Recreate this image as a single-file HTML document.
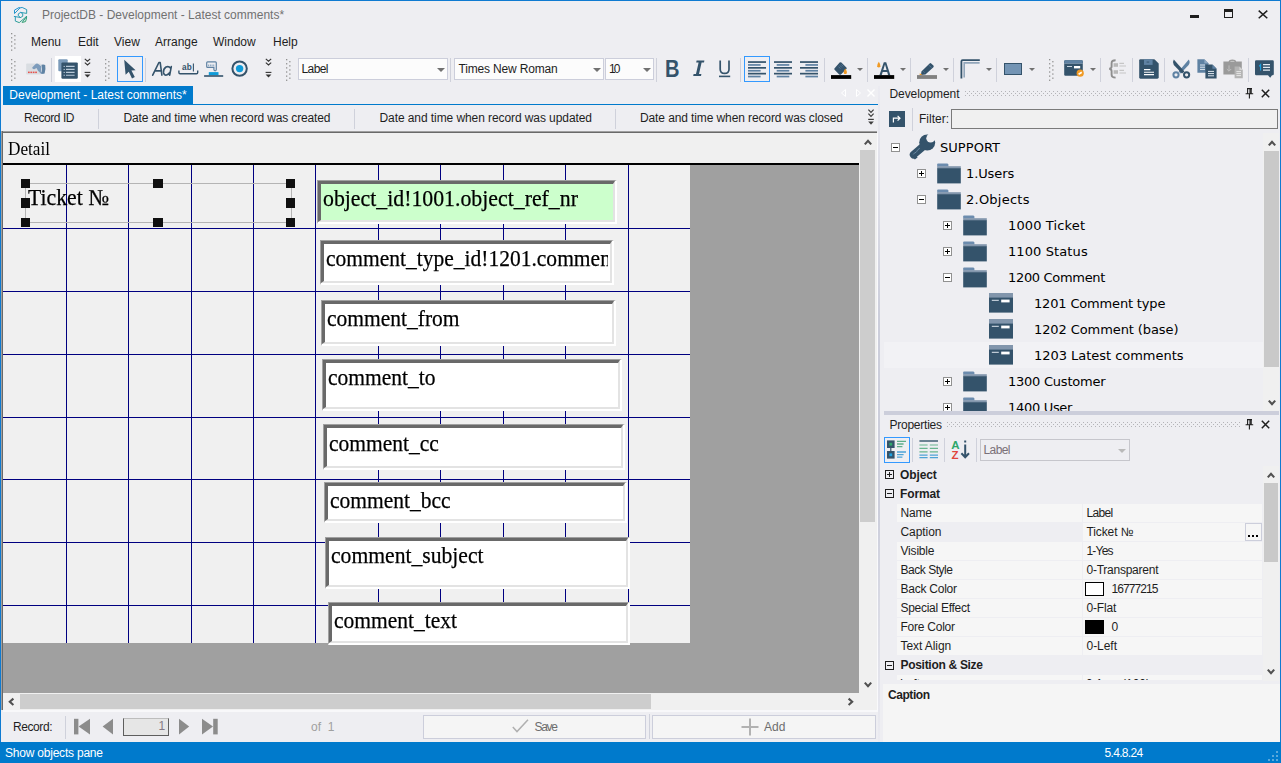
<!DOCTYPE html>
<html><head><meta charset="utf-8"><title>ProjectDB</title>
<style>
*{box-sizing:border-box;margin:0;padding:0}
html,body{width:1281px;height:763px;overflow:hidden;background:#eeeef2}
body{position:relative;font-family:"Liberation Sans",sans-serif;font-size:12px;color:#1e1e1e}
.abs,.abs *{position:absolute}
#win{position:absolute;left:0;top:0;width:1281px;height:763px;border:1px solid #0e7ad1;border-bottom:0;background:#eeeef2}
.t{position:absolute;white-space:nowrap;line-height:16px;height:16px}
.sep{position:absolute;width:1px;background:#cfd1db}
.grip{position:absolute;width:6px;background-image:radial-gradient(circle at 1px 1px,#9a9a9a 0.6px,transparent 1px),radial-gradient(circle at 1px 1px,#9a9a9a 0.6px,transparent 1px);background-size:2px 4px;background-position:0 0,3px 2px;background-repeat:repeat-y}
.hgrip{position:absolute;height:5px;background-image:radial-gradient(circle,#aaa 0.55px,transparent 0.85px),radial-gradient(circle,#aaa 0.55px,transparent 0.85px);background-size:4px 4px;background-position:0 0,2px 2px}
.combo{position:absolute;background:#fcfcfc;border:1px solid #cccedb}
.combo .t{left:3px;top:3px}
.arr{position:absolute;width:0;height:0;border-left:4px solid transparent;border-right:4px solid transparent;border-top:4.5px solid #717171}
.selbtn{position:absolute;border:1px solid #3399ff}
svg{position:absolute;overflow:visible}
.serif{font-family:"Liberation Serif",serif;color:#000;-webkit-text-stroke:0.25px #000}
.fld{position:absolute;border:1px solid;border-color:#a0a0a0 #fff #fff #a0a0a0;border-right-width:2px;border-bottom-width:2px}
.fi{position:absolute;left:0;top:0;right:0;bottom:0;border:solid;border-width:3px 2px 2px 3px;border-color:#696969 #e3e3e3 #e3e3e3 #696969;background:inherit;overflow:hidden}
.fi .t{position:absolute}
.fc{position:absolute;left:0;top:0;right:2px;bottom:0;overflow:hidden}
</style></head><body>
<div id="win"></div>
<svg style="left:8px;top:2px" width="26" height="26" viewBox="0 0 763 763" fill="none" stroke="url(#lg)" stroke-width="29" stroke-linejoin="round" stroke-linecap="round">
<defs><linearGradient id="lg" gradientUnits="userSpaceOnUse" x1="185" y1="150" x2="545" y2="600"><stop offset="0" stop-color="#1a8fe0"/><stop offset="0.55" stop-color="#2a9cb0"/><stop offset="1" stop-color="#2f9e5a"/></linearGradient></defs>
<path d="M200 232 L325 162 L352 174 L200 330 Z"/>
<path d="M352 174 L415 160 L548 222 L548 335 L372 305"/>
<path d="M312 342 L372 308 L432 345 L432 420 L368 455 L312 412 Z"/>
<path d="M185 425 L368 455 M215 440 L215 560 L330 605 L545 425"/>
<path d="M545 425 L545 470 L515 575 L415 600 L515 470 Z"/>
</svg>
<div class="t" style="left:42px;top:7px;color:#717171">ProjectDB - Development - Latest comments*</div>
<div style="position:absolute;left:1190px;top:15px;width:9px;height:3px;background:#1e1e1e"></div>
<div style="position:absolute;left:1224px;top:9px;width:9px;height:9px;border:1px solid #1e1e1e;border-top-width:3px"></div>
<svg style="left:1258px;top:10px" width="10" height="9" viewBox="0 0 10 9"><path d="M0.7 0.6 L9.3 8.2 M9.3 0.6 L0.7 8.2" stroke="#1e1e1e" stroke-width="1.5"/></svg>
<svg style="left:11px;top:33px" width="5" height="19" fill="#909090"><rect x="0" y="0.00" width="1.3" height="1.3"/><rect x="3.2" y="2.06" width="1.3" height="1.3"/><rect x="0" y="4.12" width="1.3" height="1.3"/><rect x="3.2" y="6.18" width="1.3" height="1.3"/><rect x="0" y="8.24" width="1.3" height="1.3"/><rect x="3.2" y="10.30" width="1.3" height="1.3"/><rect x="0" y="12.36" width="1.3" height="1.3"/><rect x="3.2" y="14.42" width="1.3" height="1.3"/><rect x="0" y="16.48" width="1.3" height="1.3"/></svg>
<div class="t" style="left:31px;top:34px;">Menu</div>
<div class="t" style="left:78px;top:34px;">Edit</div>
<div class="t" style="left:114px;top:34px;">View</div>
<div class="t" style="left:155px;top:34px;">Arrange</div>
<div class="t" style="left:213px;top:34px;">Window</div>
<div class="t" style="left:273px;top:34px;">Help</div>
<svg style="left:11px;top:59px" width="5" height="22" fill="#909090"><rect x="0" y="0.00" width="1.3" height="1.3"/><rect x="3.2" y="2.06" width="1.3" height="1.3"/><rect x="0" y="4.12" width="1.3" height="1.3"/><rect x="3.2" y="6.18" width="1.3" height="1.3"/><rect x="0" y="8.24" width="1.3" height="1.3"/><rect x="3.2" y="10.30" width="1.3" height="1.3"/><rect x="0" y="12.36" width="1.3" height="1.3"/><rect x="3.2" y="14.42" width="1.3" height="1.3"/><rect x="0" y="16.48" width="1.3" height="1.3"/><rect x="3.2" y="18.54" width="1.3" height="1.3"/><rect x="0" y="20.60" width="1.3" height="1.3"/></svg>
<svg style="left:26px;top:61px" width="21" height="15" viewBox="0 0 21 15">
<rect x="0.2" y="2.4" width="14.6" height="11.2" rx="0.8" fill="#d9dde2"/>
<path d="M6.2 6.6 L9.4 3.2 Q10.9 2 12.3 3 L15.2 5.2 L15.2 10.6 L17.2 12.6 L15.2 12.9 L12 9.8 L10.5 6.9 L8.2 8.3 Q6.3 8.4 6.2 6.6 Z" fill="#7d9cbc"/>
<path d="M15.4 3.8 Q17.4 3 19.2 4 Q20 8.4 18.6 12.6 Q16.8 13.2 15.6 12.2 Q16.4 8 15.4 3.8Z" fill="#5f82a3"/>
<rect x="2" y="10.6" width="1.7" height="1.5" fill="#e8504a"/><rect x="4.4" y="10.6" width="1.7" height="1.5" fill="#e8504a"/><rect x="6.8" y="10.6" width="1.7" height="1.5" fill="#e8504a"/><rect x="9.2" y="10.6" width="1.7" height="1.5" fill="#e8504a"/>
</svg>
<div class="sep" style="left:51px;top:58px;height:24px"></div>
<div style="position:absolute;left:55px;top:56px;width:26px;height:26px;background:#fff"></div>
<svg style="left:58px;top:59px" width="21" height="21" viewBox="0 0 21 21">
<rect x="0.3" y="0.3" width="9.4" height="12" rx="1" fill="#7b9bba"/>
<rect x="3.4" y="3.4" width="16.4" height="16.4" rx="1.2" fill="#34536b"/>
<g stroke="#b9c9d8" stroke-width="1.1"><path d="M8 7.4H16.6M8 10.4H16.6M8 13.4H16.6M8 16.2H16.6"/></g>
<g fill="#b9c9d8"><rect x="5.6" y="6.9" width="1.2" height="1.1"/><rect x="5.6" y="9.9" width="1.2" height="1.1"/><rect x="5.6" y="12.9" width="1.2" height="1.1"/><rect x="5.6" y="15.7" width="1.2" height="1.1"/></g>
</svg>
<svg style="left:84px;top:58px" width="7" height="21" viewBox="0 0 7 21" fill="none">
<path d="M0.8 0.8 L3.5 3.2 L6.2 0.8 M0.8 4.6 L3.5 7 L6.2 4.6" stroke="#333" stroke-width="1.1"/>
<path d="M0.6 14.4H6.4" stroke="#333" stroke-width="1.1"/><path d="M0.6 16.4H6.4L3.5 19.6Z" fill="#333"/></svg>
<svg style="left:105px;top:59px" width="5" height="22" fill="#909090"><rect x="0" y="0.00" width="1.3" height="1.3"/><rect x="3.2" y="2.06" width="1.3" height="1.3"/><rect x="0" y="4.12" width="1.3" height="1.3"/><rect x="3.2" y="6.18" width="1.3" height="1.3"/><rect x="0" y="8.24" width="1.3" height="1.3"/><rect x="3.2" y="10.30" width="1.3" height="1.3"/><rect x="0" y="12.36" width="1.3" height="1.3"/><rect x="3.2" y="14.42" width="1.3" height="1.3"/><rect x="0" y="16.48" width="1.3" height="1.3"/><rect x="3.2" y="18.54" width="1.3" height="1.3"/><rect x="0" y="20.60" width="1.3" height="1.3"/></svg>
<div class="selbtn" style="left:117px;top:56px;width:26px;height:26px"></div>
<svg style="left:123px;top:59px" width="14" height="20" viewBox="0 0 14 20"><path d="M1.2 0.8 L12.6 11.2 L8.4 11.6 L11.8 18 L9 19.4 L5.8 12.8 L2.6 15.8 Z" fill="#34536b"/></svg>
<div class="sep" style="left:145px;top:58px;height:24px"></div>
<svg style="left:151px;top:60px" width="24" height="18" viewBox="0 0 24 18" fill="none" stroke="#34536b" stroke-width="1.6" stroke-linejoin="round" stroke-linecap="round">
<path d="M1.7 15.2 L7.9 2.5 L9.2 2.5 L10.9 15.2 M4 10.9 H10.2"/>
<path d="M20.3 6.6 L18.7 15.2 M19.8 8.4 Q17.8 5.8 15 7 Q12.2 8.8 12.5 12.4 Q13 15.6 15.6 15 Q17.6 14.4 19 12.2"/></svg>
<svg style="left:178px;top:60px" width="21" height="18" viewBox="0 0 21 18"><text x="4.1" y="10.1" font-family="Liberation Sans, sans-serif" font-weight="bold" font-size="8.6" fill="#34536b" textLength="9.6" lengthAdjust="spacingAndGlyphs">ab</text>
<path d="M15.4 3.4V11.6" stroke="#34536b" stroke-width="1.1"/>
<path d="M0.9 10.6V12.6Q0.9 13.8 2.1 13.8H18.5Q19.7 13.8 19.7 12.6V10.6" fill="none" stroke="#34536b" stroke-width="1.4"/></svg>
<svg style="left:204px;top:60px" width="20" height="18" viewBox="0 0 20 18">
<path d="M3.6 1.9H11.4Q12.3 1.9 12.3 2.8V9.6Q12.3 10.8 11.1 10.8Q9.9 10.8 9.9 9.6V7.3H3.6Q2.7 7.3 2.7 6.4V2.8Q2.7 1.9 3.6 1.9Z" fill="none" stroke="#5f82a3" stroke-width="1.2"/>
<path d="M4.2 4.6h0.9v1.6h-0.9zM5.9 4.6h0.9v1.6h-0.9zM7.6 4.6h0.9v1.6h-0.9zM9.3 4.6h0.9v1.6h-0.9z" fill="#7b9bba"/>
<rect x="4.8" y="12.1" width="9.7" height="3.2" fill="#0f9bd9"/>
<rect x="0.1" y="15.2" width="19.1" height="1.6" fill="#34536b"/></svg>
<svg style="left:231px;top:60px" width="18" height="18" viewBox="0 0 18 18"><circle cx="8.6" cy="8.6" r="7.2" fill="none" stroke="#34536b" stroke-width="2"/><circle cx="8.6" cy="8.6" r="3.7" fill="#0f9bd9"/></svg>
<svg style="left:265px;top:58px" width="7" height="21" viewBox="0 0 7 21" fill="none">
<path d="M0.8 0.8 L3.5 3.2 L6.2 0.8 M0.8 4.6 L3.5 7 L6.2 4.6" stroke="#333" stroke-width="1.1"/>
<path d="M0.6 14.4H6.4" stroke="#333" stroke-width="1.1"/><path d="M0.6 16.4H6.4L3.5 19.6Z" fill="#333"/></svg>
<svg style="left:286px;top:59px" width="5" height="22" fill="#909090"><rect x="0" y="0.00" width="1.3" height="1.3"/><rect x="3.2" y="2.06" width="1.3" height="1.3"/><rect x="0" y="4.12" width="1.3" height="1.3"/><rect x="3.2" y="6.18" width="1.3" height="1.3"/><rect x="0" y="8.24" width="1.3" height="1.3"/><rect x="3.2" y="10.30" width="1.3" height="1.3"/><rect x="0" y="12.36" width="1.3" height="1.3"/><rect x="3.2" y="14.42" width="1.3" height="1.3"/><rect x="0" y="16.48" width="1.3" height="1.3"/><rect x="3.2" y="18.54" width="1.3" height="1.3"/><rect x="0" y="20.60" width="1.3" height="1.3"/></svg>
<div class="combo" style="left:298px;top:58px;width:150px;height:22px"><div class="t" style="left:2.5px;top:2px;;letter-spacing:-0.594px">Label</div></div><div class="arr" style="left:436.5px;top:68px;border-top-color:#717171"></div>
<div class="sep" style="left:450px;top:58px;height:24px"></div>
<div class="combo" style="left:454px;top:58px;width:150px;height:22px"><div class="t" style="left:3.5px;top:2px;;letter-spacing:-0.163px">Times New Roman</div></div><div class="arr" style="left:592.5px;top:68px;border-top-color:#717171"></div>
<div class="combo" style="left:605px;top:58px;width:49px;height:22px"><div class="t" style="left:3px;top:2px;;letter-spacing:-1.859px">10</div></div><div class="arr" style="left:642.5px;top:68px;border-top-color:#717171"></div>
<div class="sep" style="left:656px;top:58px;height:24px"></div>
<svg style="left:665px;top:59px" width="16" height="20" viewBox="0 0 16 20"><text x="0" y="17.6" font-family="Liberation Sans, sans-serif" font-weight="bold" font-size="23" fill="#34536b" textLength="14.5" lengthAdjust="spacingAndGlyphs">B</text></svg>
<svg style="left:692px;top:59px" width="14" height="20" viewBox="0 0 14 20"><path d="M4.6 1.4H12.4L12 3.4H9.6L7 15H9.4L9 17H1.2L1.6 15H4L6.6 3.4H4.2Z" fill="#34536b"/></svg>
<svg style="left:718px;top:59px" width="14" height="20" viewBox="0 0 14 20"><path d="M2.2 1.4V10.2Q2.2 14.4 6.6 14.4Q11 14.4 11 10.2V1.4" fill="none" stroke="#34536b" stroke-width="1.7"/><path d="M1 17.4H12.2" stroke="#34536b" stroke-width="1.6"/></svg>
<div class="sep" style="left:740px;top:58px;height:24px"></div>
<div class="selbtn" style="left:744px;top:56px;width:26px;height:26px"></div>
<svg style="left:748px;top:59px" width="18" height="20" viewBox="0 0 18 20"><rect x="0.0" y="2.2" width="18" height="1.7" fill="#34536b"/><rect x="0.0" y="5.1" width="12.6" height="1.7" fill="#5f82a3"/><rect x="0.0" y="8.0" width="18" height="1.7" fill="#34536b"/><rect x="0.0" y="10.9" width="12.6" height="1.7" fill="#5f82a3"/><rect x="0.0" y="13.8" width="18" height="1.7" fill="#34536b"/><rect x="0.0" y="16.7" width="12.6" height="1.7" fill="#5f82a3"/></svg>
<svg style="left:774px;top:59px" width="18" height="20" viewBox="0 0 18 20"><rect x="0.0" y="2.2" width="18" height="1.7" fill="#34536b"/><rect x="2.7" y="5.1" width="12.6" height="1.7" fill="#5f82a3"/><rect x="0.0" y="8.0" width="18" height="1.7" fill="#34536b"/><rect x="2.7" y="10.9" width="12.6" height="1.7" fill="#5f82a3"/><rect x="0.0" y="13.8" width="18" height="1.7" fill="#34536b"/><rect x="2.7" y="16.7" width="12.6" height="1.7" fill="#5f82a3"/></svg>
<svg style="left:800px;top:59px" width="18" height="20" viewBox="0 0 18 20"><rect x="0.0" y="2.2" width="18" height="1.7" fill="#34536b"/><rect x="5.4" y="5.1" width="12.6" height="1.7" fill="#5f82a3"/><rect x="0.0" y="8.0" width="18" height="1.7" fill="#34536b"/><rect x="5.4" y="10.9" width="12.6" height="1.7" fill="#5f82a3"/><rect x="0.0" y="13.8" width="18" height="1.7" fill="#34536b"/><rect x="5.4" y="16.7" width="12.6" height="1.7" fill="#5f82a3"/></svg>
<div class="sep" style="left:824px;top:58px;height:24px"></div>
<svg style="left:831px;top:60px" width="21" height="20" viewBox="0 0 21 20">
<path d="M8.6 2.6 Q9.5 1.7 10.4 2.6 L15.4 7.4 Q16.2 8.2 15.4 9 L10 14.4 Q9.1 15.2 8.2 14.4 L3.6 9.8 Q2.8 9 3.6 8.2 Z" fill="#34536b"/>
<path d="M7.6 6.6 L9.4 8.6 M9 5.4 L10.8 7.4 M10.4 4.4 L12.2 6.4" stroke="#5f82a3" stroke-width="0.7"/>
<path d="M14.3 8.4 Q16.4 11.4 15.9 12.9 Q15.3 14.1 14.3 14.1 Q13.3 14.1 12.7 12.9 Q12.2 11.4 14.3 8.4Z" fill="#f09a24"/>
<rect x="0" y="15.1" width="20.2" height="3.8" fill="#000"/></svg>
<div class="arr" style="left:856.5px;top:68px;border-left-width:3px;border-right-width:3px;border-top-width:3px;border-top-color:#717171"></div>
<div class="sep" style="left:867px;top:58px;height:24px"></div>
<svg style="left:874px;top:60px" width="21" height="20" viewBox="0 0 21 20">
<path d="M4.8 1.8 Q6.9 4.8 6.4 6.3 Q5.8 7.5 4.8 7.5 Q3.8 7.5 3.2 6.3 Q2.7 4.8 4.8 1.8Z" fill="#f09a24"/>
<path d="M5.4 15.2 L9.8 2.2 H12.2 L16.4 15.2 H14.1 L13.2 12 H8.7 L7.7 15.2 Z M9.3 10.1 H12.6 L11 4.6Z" fill="#34536b" fill-rule="evenodd"/>
<rect x="0" y="15.1" width="20.2" height="3.8" fill="#000"/></svg>
<div class="arr" style="left:899.5px;top:68px;border-left-width:3px;border-right-width:3px;border-top-width:3px;border-top-color:#717171"></div>
<div class="sep" style="left:910px;top:58px;height:24px"></div>
<svg style="left:917px;top:60px" width="21" height="20" viewBox="0 0 21 20">
<path d="M4.4 11.4 L12.6 3.4 Q13.4 2.6 14.2 3.4 L16.4 5.6 Q17.2 6.4 16.4 7.2 L8.4 14.6 L4 14.9 Z" fill="#34536b"/>
<path d="M12 5.2 L14.4 7.6 M6.4 11.4 L7.6 12.6" stroke="#5f82a3" stroke-width="0.8"/>
<path d="M2.8 13.2 L5.4 15 L2.6 15.2Z" fill="#f09a24"/>
<rect x="0" y="15.1" width="20" height="3.8" fill="#808080"/></svg>
<div class="arr" style="left:942.5px;top:68px;border-left-width:3px;border-right-width:3px;border-top-width:3px;border-top-color:#717171"></div>
<div class="sep" style="left:953px;top:58px;height:24px"></div>
<svg style="left:960px;top:59px" width="21" height="20" viewBox="0 0 21 20" fill="none">
<path d="M1.4 19.4V2.4Q1.4 1.2 2.6 1.2H19.8" stroke="#34536b" stroke-width="1.8"/>
<path d="M4.2 18.6V3.9H19.6" stroke="#92a6ba" stroke-width="1.6"/></svg>
<div class="arr" style="left:985.5px;top:68px;border-left-width:3px;border-right-width:3px;border-top-width:3px;border-top-color:#717171"></div>
<div class="sep" style="left:996px;top:58px;height:24px"></div>
<div style="position:absolute;left:1004px;top:63px;width:18px;height:12px;background:#7394b4;border:1.6px solid #34536b"></div>
<div class="arr" style="left:1028.5px;top:68px;border-left-width:3px;border-right-width:3px;border-top-width:3px;border-top-color:#717171"></div>
<svg style="left:1049px;top:59px" width="5" height="22" fill="#909090"><rect x="0" y="0.00" width="1.3" height="1.3"/><rect x="3.2" y="2.06" width="1.3" height="1.3"/><rect x="0" y="4.12" width="1.3" height="1.3"/><rect x="3.2" y="6.18" width="1.3" height="1.3"/><rect x="0" y="8.24" width="1.3" height="1.3"/><rect x="3.2" y="10.30" width="1.3" height="1.3"/><rect x="0" y="12.36" width="1.3" height="1.3"/><rect x="3.2" y="14.42" width="1.3" height="1.3"/><rect x="0" y="16.48" width="1.3" height="1.3"/><rect x="3.2" y="18.54" width="1.3" height="1.3"/><rect x="0" y="20.60" width="1.3" height="1.3"/></svg>
<svg style="left:1064px;top:60px" width="21" height="18" viewBox="0 0 21 18">
<rect x="0.2" y="0.2" width="18.6" height="15.6" rx="1.2" fill="#34536b"/>
<rect x="0.2" y="0.2" width="18.6" height="2.8" rx="1" fill="#5f82a3"/><rect x="0.2" y="3" width="18.6" height="0.7" fill="#8ea5bd"/>
<rect x="3" y="6" width="5" height="1" fill="#c8d4e0"/><rect x="10" y="6" width="6.2" height="2.4" fill="#fff"/>
<circle cx="16.2" cy="13.2" r="3.6" fill="#f09a24"/><path d="M14.6 14.2L17.8 12.2" stroke="#fff" stroke-width="1.6"/></svg>
<div class="arr" style="left:1089.5px;top:68px;border-left-width:3px;border-right-width:3px;border-top-width:3px;border-top-color:#717171"></div>
<div class="sep" style="left:1100px;top:58px;height:24px"></div>
<svg style="left:1108px;top:59px" width="19" height="20" viewBox="0 0 19 20" fill="none">
<path d="M7.6 1.2 Q3.6 1.2 3.6 4 V7.4 Q3.6 9.6 1.2 9.8 Q3.6 10 3.6 12.2 V15.8 Q3.6 18.6 7.6 18.6" stroke="#8e8e8e" stroke-width="1.9"/>
<rect x="5.6" y="4.2" width="4.4" height="3.6" fill="#b8b8b8"/><rect x="5.6" y="11.2" width="4.4" height="3.6" fill="#b8b8b8"/>
<path d="M11.4 4.4H16M11.4 7H18M11.4 11.4H16M11.4 14H18" stroke="#c6c6c6" stroke-width="1.1"/></svg>
<div class="sep" style="left:1132px;top:58px;height:24px"></div>
<svg style="left:1139px;top:59px" width="20" height="20" viewBox="0 0 20 20">
<path d="M1.4 0.3H15.4L19.7 4.6V18.3Q19.7 19.7 18.3 19.7H1.4Q0.2 19.7 0.2 18.3V1.6Q0.2 0.3 1.4 0.3Z" fill="#34536b"/>
<rect x="5" y="0.3" width="8.6" height="5.6" fill="#5f82a3"/><rect x="7.6" y="2.6" width="2.6" height="0.9" fill="#34536b"/>
<path d="M5 10.6H11.4M5 13.2H15M5 15.6H15" stroke="#fff" stroke-width="1.1"/></svg>
<div class="sep" style="left:1164px;top:58px;height:24px"></div>
<svg style="left:1172px;top:59px" width="19" height="20" viewBox="0 0 19 20">
<path d="M16.8 0.6 Q18.6 3.4 16.6 6 L8.6 14.4 L6.6 12.6 Z" fill="#5f82a3"/>
<path d="M1.8 0.6 L12.4 12.4 L10 14.4 L1.8 6 Q0 3.2 1.8 0.6Z" fill="#34536b"/>
<circle cx="4" cy="15.8" r="2.6" fill="none" stroke="#5f82a3" stroke-width="2"/>
<circle cx="14.6" cy="15.8" r="2.6" fill="none" stroke="#34536b" stroke-width="2"/></svg>
<svg style="left:1197px;top:59px" width="21" height="20" viewBox="0 0 21 20">
<path d="M0.4 0.3H7.4L11.4 4.3V13.8H0.4Z" fill="#5f82a3"/><path d="M7.4 0.3L11.4 4.3H7.4Z" fill="#8fa9c3"/>
<path d="M3 6H8M3 8.2H8M3 10.4H8" stroke="#dfe7ef" stroke-width="1"/>
<path d="M8.4 5.6H15.4L19.6 9.8V19.6H8.4Z" fill="#34536b"/><path d="M15.4 5.6L19.6 9.8H15.4Z" fill="#5f82a3"/>
<path d="M11 12.4H17M11 14.6H17M11 16.8H17" stroke="#dfe7ef" stroke-width="1"/></svg>
<svg style="left:1223px;top:59px" width="21" height="20" viewBox="0 0 21 20">
<path d="M0.4 2.6H5.6Q6 0.4 9.4 0.4Q12.8 0.4 13.2 2.6H18.8V15.4H0.4Z" fill="#9a9a9a"/>
<path d="M7.4 2.4H11.4" stroke="#c9c9c9" stroke-width="1"/>
<path d="M6 6.4V12M3.8 10L6 12.2L8.2 10" stroke="#bdbdbd" stroke-width="1" fill="none"/>
<path d="M11.6 7.6H16.4L19.8 11V19.2H11.6Z" fill="#b4b4b4"/><path d="M16.4 7.6L19.8 11H16.4Z" fill="#d2d2d2"/>
<path d="M13.4 12.6H18M13.4 14.6H18M13.4 16.6H18" stroke="#e6e6e6" stroke-width="1"/></svg>
<div class="sep" style="left:1248px;top:58px;height:24px"></div>
<svg style="left:1255px;top:60px" width="20" height="19" viewBox="0 0 20 19">
<path d="M1.2 0.2H17.6Q18.8 0.2 18.8 1.4V14Q18.8 15.2 17.6 15.2H17L15.2 17.8L13 15.2H1.2Q0 15.2 0 14V1.4Q0 0.2 1.2 0.2Z" fill="#34536b"/>
<path d="M8 4.6H15M8 7.4H15M8 10.2H15" stroke="#e4ebf2" stroke-width="1.2"/>
<path d="M4.2 6.4L5.6 4.6V10.6" stroke="#1ba1e2" stroke-width="1.1" fill="none"/></svg>
<div style="position:absolute;left:3px;top:86px;width:190px;height:18px;background:#007acc"></div>
<div class="t" style="left:9.3px;top:87px;color:#fff;letter-spacing:-0.001px">Development - Latest comments*</div>
<div style="position:absolute;left:3px;top:104px;width:875px;height:1px;background:#007acc"></div>
<svg style="left:840px;top:88px" width="42" height="11" viewBox="0 0 42 11" fill="none" stroke="#fff" stroke-width="1">
<path d="M5.5 1.5V8.5L1.5 5Z"/><path d="M16.5 1.5V8.5L20.5 5Z"/><path d="M27.5 1.5L34.5 8.5M34.5 1.5L27.5 8.5" stroke-width="1.4"/></svg>
<div class="t" style="left:24px;top:110px;;letter-spacing:-0.441px">Record ID</div>
<div class="t" style="left:123.5px;top:110px;;letter-spacing:-0.142px">Date and time when record was created</div>
<div class="t" style="left:379.5px;top:110px;;letter-spacing:-0.082px">Date and time when record was updated</div>
<div class="t" style="left:640px;top:110px;;letter-spacing:-0.108px">Date and time when record was closed</div>
<div class="sep" style="left:98px;top:109px;height:20px"></div>
<div class="sep" style="left:354px;top:109px;height:20px"></div>
<div class="sep" style="left:615px;top:109px;height:20px"></div>
<svg style="left:867.5px;top:109px" width="6" height="17" viewBox="0 0 6 17" fill="none">
<path d="M0.4 0.6L3 3.4L5.6 0.6M0.4 4.6L3 7.4L5.6 4.6" stroke="#3c3c3c" stroke-width="1.2"/><path d="M0.2 10.4H5.8" stroke="#3c3c3c" stroke-width="1.2"/><path d="M0.2 12.4H5.8L3 15.8Z" fill="#3c3c3c"/></svg>
<div style="position:absolute;left:1px;top:131px;width:876px;height:2px;background:#a0a0a0;border-bottom:1px solid #696969"></div>
<div style="position:absolute;left:1px;top:131px;width:2px;height:579px;background:#a0a0a0;border-right:1px solid #696969"></div>
<div style="position:absolute;left:3px;top:133px;width:856px;height:32px;background:#f0f0f0;border-bottom:2px solid #000"></div>
<div class="t" style="left:8px;top:138px;font-family:'Liberation Serif',serif;font-size:19px;line-height:22px;height:22px;color:#000;transform-origin:0 0;transform:scaleX(0.905)">Detail</div>
<div style="position:absolute;left:3px;top:165px;width:856px;height:528px;background:#a0a0a0"></div>
<div style="position:absolute;left:3px;top:165px;width:687px;height:478px;background:#f0f0f0;overflow:hidden"><div style="position:absolute;left:63px;top:0;width:1px;height:478px;background:#000080"></div><div style="position:absolute;left:125px;top:0;width:1px;height:478px;background:#000080"></div><div style="position:absolute;left:188px;top:0;width:1px;height:478px;background:#000080"></div><div style="position:absolute;left:250px;top:0;width:1px;height:478px;background:#000080"></div><div style="position:absolute;left:312px;top:0;width:1px;height:478px;background:#000080"></div><div style="position:absolute;left:375px;top:0;width:1px;height:478px;background:#000080"></div><div style="position:absolute;left:437px;top:0;width:1px;height:478px;background:#000080"></div><div style="position:absolute;left:500px;top:0;width:1px;height:478px;background:#000080"></div><div style="position:absolute;left:562px;top:0;width:1px;height:478px;background:#000080"></div><div style="position:absolute;left:625px;top:0;width:1px;height:478px;background:#000080"></div><div style="position:absolute;left:0;top:63px;width:687px;height:1px;background:#000080"></div><div style="position:absolute;left:0;top:126px;width:687px;height:1px;background:#000080"></div><div style="position:absolute;left:0;top:189px;width:687px;height:1px;background:#000080"></div><div style="position:absolute;left:0;top:252px;width:687px;height:1px;background:#000080"></div><div style="position:absolute;left:0;top:314px;width:687px;height:1px;background:#000080"></div><div style="position:absolute;left:0;top:377px;width:687px;height:1px;background:#000080"></div><div style="position:absolute;left:0;top:440px;width:687px;height:1px;background:#000080"></div></div>
<div style="position:absolute;left:25px;top:183px;width:267px;height:40px;border:1px solid #b4b4b4"></div>
<div style="position:absolute;left:21px;top:179px;width:9px;height:9px;background:#101010"></div>
<div style="position:absolute;left:21px;top:198px;width:9px;height:10px;background:#101010"></div>
<div style="position:absolute;left:21px;top:218px;width:9px;height:9px;background:#101010"></div>
<div style="position:absolute;left:153px;top:179px;width:10px;height:9px;background:#101010"></div>
<div style="position:absolute;left:153px;top:218px;width:10px;height:9px;background:#101010"></div>
<div style="position:absolute;left:286px;top:179px;width:9px;height:9px;background:#101010"></div>
<div style="position:absolute;left:286px;top:198px;width:9px;height:10px;background:#101010"></div>
<div style="position:absolute;left:286px;top:218px;width:9px;height:9px;background:#101010"></div>
<div class="t serif" style="left:28px;top:184px;font-size:23px;line-height:28px;height:28px;transform-origin:0 0;transform:scaleX(0.945)">Ticket №</div>
<div class="fld" style="left:317px;top:180px;width:300px;height:44px;background:#ccffcc"><div class="fi"><div class="fc"><div class="t serif" style="left:2px;top:0.9px;font-size:23px;line-height:28px;height:28px;transform-origin:0 0;transform:scaleX(0.948)">object_id!1001.object_ref_nr</div></div></div></div>
<div class="fld" style="left:320px;top:240px;width:294px;height:45px;background:#fff"><div class="fi"><div class="fc"><div class="t serif" style="left:2px;top:1.4px;font-size:23px;line-height:28px;height:28px;transform-origin:0 0;transform:scaleX(0.935)">comment_type_id!1201.comment_type_name</div></div></div></div>
<div class="fld" style="left:321px;top:300px;width:295px;height:46px;background:#fff"><div class="fi"><div class="fc"><div class="t serif" style="left:2px;top:1.4px;font-size:23px;line-height:28px;height:28px;transform-origin:0 0;transform:scaleX(0.935)">comment_from</div></div></div></div>
<div class="fld" style="left:322px;top:359px;width:300px;height:52px;background:#fff"><div class="fi"><div class="fc"><div class="t serif" style="left:2px;top:1.4px;font-size:23px;line-height:28px;height:28px;transform-origin:0 0;transform:scaleX(0.935)">comment_to</div></div></div></div>
<div class="fld" style="left:323px;top:424px;width:302px;height:46px;background:#fff"><div class="fi"><div class="fc"><div class="t serif" style="left:2px;top:1.9px;font-size:23px;line-height:28px;height:28px;transform-origin:0 0;transform:scaleX(0.935)">comment_cc</div></div></div></div>
<div class="fld" style="left:324px;top:482px;width:303px;height:41px;background:#fff"><div class="fi"><div class="fc"><div class="t serif" style="left:2px;top:0.9px;font-size:23px;line-height:28px;height:28px;transform-origin:0 0;transform:scaleX(0.935)">comment_bcc</div></div></div></div>
<div class="fld" style="left:325px;top:537px;width:305px;height:52px;background:#fff"><div class="fi"><div class="fc"><div class="t serif" style="left:2px;top:1.4px;font-size:23px;line-height:28px;height:28px;transform-origin:0 0;transform:scaleX(0.94)">comment_subject</div></div></div></div>
<div class="fld" style="left:328px;top:602px;width:302px;height:43px;background:#fff"><div class="fi"><div class="fc"><div class="t serif" style="left:2px;top:1.4px;font-size:23px;line-height:28px;height:28px;transform-origin:0 0;transform:scaleX(0.935)">comment_text</div></div></div></div>
<div style="position:absolute;left:859px;top:133px;width:18px;height:560px;background:#f0f0f0"></div>
<div style="position:absolute;left:860px;top:150px;width:15px;height:372px;background:#cdcdcd"></div>
<svg style="left:863.7px;top:139.3px" width="8" height="6" viewBox="0 0 8 6" fill="none"><path d="M0.8 5.4L4 1.8L7.2 5.4" stroke="#505050" stroke-width="2.1"/></svg>
<svg style="left:863.7px;top:682.3px" width="8" height="6" viewBox="0 0 8 6" fill="none"><path d="M0.8 0.6L4 4.2L7.2 0.6" stroke="#505050" stroke-width="2.1"/></svg>
<div style="position:absolute;left:3px;top:693px;width:856px;height:17px;background:#f0f0f0"></div>
<div style="position:absolute;left:20px;top:694px;width:631px;height:15px;background:#cdcdcd"></div>
<svg style="left:8px;top:698px" width="6" height="8" viewBox="0 0 6 8" fill="none"><path d="M5.4 0.6L1.8 3.8L5.4 7" stroke="#505050" stroke-width="2.1"/></svg>
<svg style="left:848px;top:698px" width="6" height="8" viewBox="0 0 6 8" fill="none"><path d="M0.6 0.6L4.2 3.8L0.6 7" stroke="#505050" stroke-width="2.1"/></svg>
<div style="position:absolute;left:859px;top:693px;width:18px;height:17px;background:#f0f0f0"></div>
<div style="position:absolute;left:3px;top:710px;width:875px;height:2px;background:#f8f8fa"></div><div style="position:absolute;left:877px;top:133px;width:1px;height:578px;background:#f9f9fb"></div><div style="position:absolute;left:878px;top:86px;width:2px;height:656px;background:linear-gradient(#ebebf1,#cccedb 35%,#cccedb 65%,#ebebf1)"></div>
<div class="t" style="left:889.5px;top:86px;;letter-spacing:-0.072px">Development</div>
<svg style="left:965px;top:91px" width="275" height="5" shape-rendering="crispEdges"><defs><pattern id="hga" width="4" height="4" patternUnits="userSpaceOnUse"><rect x="0" y="0" width="1" height="1" fill="#b4b4b8"/><rect x="2" y="2" width="1" height="1" fill="#b4b4b8"/></pattern></defs><rect width="275" height="5" fill="url(#hga)"/></svg>
<svg style="left:1245px;top:88px" width="9" height="11" viewBox="0 0 9 11" fill="none"><path d="M2 0.6H7M2.6 0.6V5.6M6.2 0.6V5.6M5 0.6V5.6M0.6 5.8H8.2M4.4 5.8V10.4" stroke="#1e1e1e" stroke-width="1.1"/></svg>
<svg style="left:1261px;top:89px" width="9" height="9" viewBox="0 0 9 9"><path d="M0.8 0.8L8.2 8.2M8.2 0.8L0.8 8.2" stroke="#1e1e1e" stroke-width="1.5"/></svg>
<div style="position:absolute;left:889px;top:111px;width:16px;height:16px;background:#34536b"></div>
<svg style="left:892px;top:114px" width="10" height="10" viewBox="0 0 10 10" fill="none"><path d="M1.4 8.6V4.2H7.6M5.6 1.8L8 4.2L5.6 6.6" stroke="#fff" stroke-width="1.2"/></svg>
<div class="sep" style="left:912px;top:108px;height:23px"></div>
<div class="t" style="left:919px;top:111px;">Filter:</div>
<div style="position:absolute;left:951px;top:109px;width:327px;height:20px;border:1px solid #7a7a7a;background:#f0f0f0"></div>
<div style="position:absolute;left:884px;top:133px;width:379px;height:278px;overflow:hidden"><div style="position:absolute;left:-884px;top:-133px"><div style="position:absolute;left:884px;top:342px;width:379px;height:26px;background:#f2f2f5"></div><div style="position:absolute;left:891px;top:143px;width:9px;height:9px;border:1px solid #919191;background:#fff"></div><div style="position:absolute;left:893px;top:147px;width:5px;height:1px;background:#000"></div><svg style="left:904px;top:130px" width="40" height="34" viewBox="0 0 40 34"><defs><mask id="wm"><rect width="40" height="34" fill="#fff"/><circle cx="26.6" cy="8.3" r="4.3" fill="#000"/><path d="M23.56 5.26L29.64 11.34L37.6 3.3L31.6 -2.8Z" fill="#000"/></mask></defs>
<g mask="url(#wm)"><circle cx="23.2" cy="12.5" r="8" fill="#34536b"/><path d="M9.6 24.7L21.5 14.5" stroke="#34536b" stroke-width="7.6" stroke-linecap="round"/><path d="M8.4 21.2L13.6 27.4L10.8 29.4L6 23.4Z" fill="#34536b"/></g>
<path d="M9.4 24.4Q10.6 22.2 12 22.4Q13 21.4 13.4 20.2Q14.8 19.6 15.6 18" stroke="#7e9cb8" stroke-width="0.7" fill="none"/></svg><div class="t" style="left:940px;top:140px;font-family:'DejaVu Sans',sans-serif;font-size:13px;color:#000;letter-spacing:0.047px">SUPPORT</div><div style="position:absolute;left:917px;top:169px;width:9px;height:9px;border:1px solid #919191;background:#fff"></div><div style="position:absolute;left:919px;top:173px;width:5px;height:1px;background:#000"></div><div style="position:absolute;left:921px;top:171px;width:1px;height:5px;background:#000"></div><svg style="left:937px;top:161.5px" width="24" height="22" viewBox="0 0 24 22"><path d="M0.2 2.2Q0.2 1.4 1 1.4H10.2Q11 1.4 11.2 2.2L11.6 4.6H0.2Z" fill="#6c8cae"/><rect x="0.2" y="4.2" width="23.6" height="2.4" fill="#8296ac"/><rect x="0.2" y="6.2" width="23.6" height="15.2" fill="#34536b"/></svg><div class="t" style="left:966px;top:166px;font-family:'DejaVu Sans',sans-serif;font-size:13px;color:#000;letter-spacing:-0.102px">1.Users</div><div style="position:absolute;left:917px;top:195px;width:9px;height:9px;border:1px solid #919191;background:#fff"></div><div style="position:absolute;left:919px;top:199px;width:5px;height:1px;background:#000"></div><svg style="left:937px;top:187.5px" width="24" height="22" viewBox="0 0 24 22"><path d="M0.2 2.2Q0.2 1.4 1 1.4H10.2Q11 1.4 11.2 2.2L11.6 4.6H0.2Z" fill="#6c8cae"/><rect x="0.2" y="4.2" width="23.6" height="2.4" fill="#8296ac"/><rect x="0.2" y="6.2" width="23.6" height="15.2" fill="#34536b"/></svg><div class="t" style="left:966px;top:192px;font-family:'DejaVu Sans',sans-serif;font-size:13px;color:#000;letter-spacing:0.236px">2.Objects</div><div style="position:absolute;left:943px;top:221px;width:9px;height:9px;border:1px solid #919191;background:#fff"></div><div style="position:absolute;left:945px;top:225px;width:5px;height:1px;background:#000"></div><div style="position:absolute;left:947px;top:223px;width:1px;height:5px;background:#000"></div><svg style="left:963px;top:213.5px" width="24" height="22" viewBox="0 0 24 22"><path d="M0.2 2.2Q0.2 1.4 1 1.4H10.2Q11 1.4 11.2 2.2L11.6 4.6H0.2Z" fill="#6c8cae"/><rect x="0.2" y="4.2" width="23.6" height="2.4" fill="#8296ac"/><rect x="0.2" y="6.2" width="23.6" height="15.2" fill="#34536b"/></svg><div class="t" style="left:1008px;top:218px;font-family:'DejaVu Sans',sans-serif;font-size:13px;color:#000;letter-spacing:0.131px">1000 Ticket</div><div style="position:absolute;left:943px;top:247px;width:9px;height:9px;border:1px solid #919191;background:#fff"></div><div style="position:absolute;left:945px;top:251px;width:5px;height:1px;background:#000"></div><div style="position:absolute;left:947px;top:249px;width:1px;height:5px;background:#000"></div><svg style="left:963px;top:239.5px" width="24" height="22" viewBox="0 0 24 22"><path d="M0.2 2.2Q0.2 1.4 1 1.4H10.2Q11 1.4 11.2 2.2L11.6 4.6H0.2Z" fill="#6c8cae"/><rect x="0.2" y="4.2" width="23.6" height="2.4" fill="#8296ac"/><rect x="0.2" y="6.2" width="23.6" height="15.2" fill="#34536b"/></svg><div class="t" style="left:1008px;top:244px;font-family:'DejaVu Sans',sans-serif;font-size:13px;color:#000;letter-spacing:0.104px">1100 Status</div><div style="position:absolute;left:943px;top:273px;width:9px;height:9px;border:1px solid #919191;background:#fff"></div><div style="position:absolute;left:945px;top:277px;width:5px;height:1px;background:#000"></div><svg style="left:963px;top:265.5px" width="24" height="22" viewBox="0 0 24 22"><path d="M0.2 2.2Q0.2 1.4 1 1.4H10.2Q11 1.4 11.2 2.2L11.6 4.6H0.2Z" fill="#6c8cae"/><rect x="0.2" y="4.2" width="23.6" height="2.4" fill="#8296ac"/><rect x="0.2" y="6.2" width="23.6" height="15.2" fill="#34536b"/></svg><div class="t" style="left:1008px;top:270px;font-family:'DejaVu Sans',sans-serif;font-size:13px;color:#000;letter-spacing:-0.320px">1200 Comment</div><svg style="left:989px;top:293px" width="24" height="20" viewBox="0 0 24 20"><rect x="0" y="0" width="24" height="19.6" fill="#34536b"/><rect x="0" y="0" width="24" height="4.6" fill="#8296ac"/><rect x="2.8" y="6.8" width="7" height="1" fill="#dfe6ee"/><rect x="12.2" y="6.6" width="8.4" height="2.8" fill="#fff"/></svg><div class="t" style="left:1034px;top:296px;font-family:'DejaVu Sans',sans-serif;font-size:13px;color:#000;letter-spacing:-0.168px">1201 Comment type</div><svg style="left:989px;top:319px" width="24" height="20" viewBox="0 0 24 20"><rect x="0" y="0" width="24" height="19.6" fill="#34536b"/><rect x="0" y="0" width="24" height="4.6" fill="#8296ac"/><rect x="2.8" y="6.8" width="7" height="1" fill="#dfe6ee"/><rect x="12.2" y="6.6" width="8.4" height="2.8" fill="#fff"/></svg><div class="t" style="left:1034px;top:322px;font-family:'DejaVu Sans',sans-serif;font-size:13px;color:#000;letter-spacing:-0.094px">1202 Comment (base)</div><svg style="left:989px;top:345px" width="24" height="20" viewBox="0 0 24 20"><rect x="0" y="0" width="24" height="19.6" fill="#34536b"/><rect x="0" y="0" width="24" height="4.6" fill="#8296ac"/><rect x="2.8" y="6.8" width="7" height="1" fill="#dfe6ee"/><rect x="12.2" y="6.6" width="8.4" height="2.8" fill="#fff"/></svg><div class="t" style="left:1034px;top:348px;font-family:'DejaVu Sans',sans-serif;font-size:13px;color:#000;letter-spacing:-0.030px">1203 Latest comments</div><div style="position:absolute;left:943px;top:377px;width:9px;height:9px;border:1px solid #919191;background:#fff"></div><div style="position:absolute;left:945px;top:381px;width:5px;height:1px;background:#000"></div><div style="position:absolute;left:947px;top:379px;width:1px;height:5px;background:#000"></div><svg style="left:963px;top:369.5px" width="24" height="22" viewBox="0 0 24 22"><path d="M0.2 2.2Q0.2 1.4 1 1.4H10.2Q11 1.4 11.2 2.2L11.6 4.6H0.2Z" fill="#6c8cae"/><rect x="0.2" y="4.2" width="23.6" height="2.4" fill="#8296ac"/><rect x="0.2" y="6.2" width="23.6" height="15.2" fill="#34536b"/></svg><div class="t" style="left:1008px;top:374px;font-family:'DejaVu Sans',sans-serif;font-size:13px;color:#000;letter-spacing:-0.240px">1300 Customer</div><div style="position:absolute;left:943px;top:403px;width:9px;height:9px;border:1px solid #919191;background:#fff"></div><div style="position:absolute;left:945px;top:407px;width:5px;height:1px;background:#000"></div><div style="position:absolute;left:947px;top:405px;width:1px;height:5px;background:#000"></div><svg style="left:963px;top:395.5px" width="24" height="22" viewBox="0 0 24 22"><path d="M0.2 2.2Q0.2 1.4 1 1.4H10.2Q11 1.4 11.2 2.2L11.6 4.6H0.2Z" fill="#6c8cae"/><rect x="0.2" y="4.2" width="23.6" height="2.4" fill="#8296ac"/><rect x="0.2" y="6.2" width="23.6" height="15.2" fill="#34536b"/></svg><div class="t" style="left:1008px;top:400px;font-family:'DejaVu Sans',sans-serif;font-size:13px;color:#000;letter-spacing:-0.307px">1400 User</div></div></div>
<div style="position:absolute;left:1263px;top:133px;width:16px;height:278px;background:#f0f0f0"></div>
<div style="position:absolute;left:1264px;top:151px;width:15px;height:216px;background:#c9c9c9"></div>
<svg style="left:1267.6px;top:140px" width="8" height="6" viewBox="0 0 8 6" fill="none"><path d="M0.8 5.4L4 1.8L7.2 5.4" stroke="#505050" stroke-width="2.1"/></svg>
<svg style="left:1267.6px;top:399.8px" width="8" height="6" viewBox="0 0 8 6" fill="none"><path d="M0.8 0.6L4 4.2L7.2 0.6" stroke="#505050" stroke-width="2.1"/></svg>
<div style="position:absolute;left:884px;top:411px;width:395px;height:4px;background:#cccedb"></div>
<div class="t" style="left:889.5px;top:417px;;letter-spacing:-0.245px">Properties</div>
<svg style="left:947px;top:422px" width="293" height="5" shape-rendering="crispEdges"><defs><pattern id="hgb" width="4" height="4" patternUnits="userSpaceOnUse"><rect x="0" y="0" width="1" height="1" fill="#b4b4b8"/><rect x="2" y="2" width="1" height="1" fill="#b4b4b8"/></pattern></defs><rect width="293" height="5" fill="url(#hgb)"/></svg>
<svg style="left:1245px;top:419px" width="9" height="11" viewBox="0 0 9 11" fill="none"><path d="M2 0.6H7M2.6 0.6V5.6M6.2 0.6V5.6M5 0.6V5.6M0.6 5.8H8.2M4.4 5.8V10.4" stroke="#1e1e1e" stroke-width="1.1"/></svg>
<svg style="left:1261px;top:420px" width="9" height="9" viewBox="0 0 9 9"><path d="M0.8 0.8L8.2 8.2M8.2 0.8L0.8 8.2" stroke="#1e1e1e" stroke-width="1.5"/></svg>
<div class="selbtn" style="left:884px;top:437px;width:26px;height:26px"></div>
<svg style="left:887px;top:440px" width="20" height="20" viewBox="0 0 20 20"><rect x="0" y="0.4" width="7.6" height="7.6" fill="#34536b"/><rect x="0" y="11" width="7.6" height="7.6" fill="#34536b"/><path d="M3.8 8V11" stroke="#34536b" stroke-width="1.2"/>
<rect x="2.4" y="2.8" width="2.8" height="2.8" fill="#2fa86a"/><rect x="2.4" y="13.4" width="2.8" height="2.8" fill="#1ba1e2"/>
<path d="M10 1.4H19M10 4H16.6M10 6.6H15.4" stroke="#5fae8a" stroke-width="1.3"/><path d="M10 12H19M10 14.6H16.6M10 17.2H15.4" stroke="#4ea3d6" stroke-width="1.3"/></svg>
<div class="sep" style="left:912px;top:438px;height:24px"></div>
<svg style="left:919px;top:440px" width="20" height="20" viewBox="0 0 20 20"><path d="M0.4 1H19" stroke="#34536b" stroke-width="1.4"/>
<path d="M0.4 5H8.6M10.8 5H19M0.4 8.4H8.6M10.8 8.4H19M0.4 11.8H8.6M10.8 11.8H19" stroke="#69b58f" stroke-width="1.2"/><path d="M0.4 15.2H8.6M10.8 15.2H19M0.4 17.6H8.6M10.8 17.6H19" stroke="#4ea3d6" stroke-width="1.2"/></svg>
<div class="sep" style="left:944px;top:438px;height:24px"></div>
<svg style="left:951px;top:439px" width="21" height="22" viewBox="0 0 21 22"><text x="0.2" y="10" font-family="Liberation Sans, sans-serif" font-weight="bold" font-size="11.5" fill="#2fa86a">A</text><text x="0.6" y="20.4" font-family="Liberation Sans, sans-serif" font-weight="bold" font-size="11.5" fill="#e0453d">Z</text>
<path d="M14.2 1.6V3.6M14.2 5.6V18M10.4 14.2L14.2 18.2L18 14.2" stroke="#34536b" stroke-width="2" fill="none"/></svg>
<div class="sep" style="left:976px;top:438px;height:24px"></div>
<div style="position:absolute;left:980px;top:439px;width:150px;height:22px;border:1px solid #c6c6cc;background:#eeeef2"><div class="t" style="left:2.5px;top:2px;color:#7a7078;letter-spacing:-0.594px">Label</div></div><div class="arr" style="left:1118px;top:449px;border-top-color:#b9b9b9"></div>
<div style="position:absolute;left:884px;top:465px;width:379px;height:215px;overflow:hidden"><div style="position:absolute;left:-884px;top:-465px"><div style="position:absolute;left:885px;top:470px;width:9px;height:9px;border:1px solid #1e1e1e"></div><div style="position:absolute;left:887px;top:474px;width:5px;height:1px;background:#1e1e1e"></div><div style="position:absolute;left:889px;top:472px;width:1px;height:5px;background:#1e1e1e"></div><div class="t" style="left:900px;top:467px;font-weight:bold;letter-spacing:-0.119px">Object</div><div style="position:absolute;left:885px;top:489px;width:9px;height:9px;border:1px solid #1e1e1e"></div><div style="position:absolute;left:887px;top:493px;width:5px;height:1px;background:#1e1e1e"></div><div class="t" style="left:900px;top:486px;font-weight:bold;letter-spacing:-0.134px">Format</div><div style="position:absolute;left:897px;top:504px;width:185px;height:18px;background:#f6f6f6"></div><div style="position:absolute;left:1083px;top:504px;width:179px;height:18px;background:#f6f6f6"></div><div class="t" style="left:900.5px;top:505px;;letter-spacing:-0.172px">Name</div><div class="t" style="left:1086.5px;top:505px;;letter-spacing:-0.656px">Label</div><div style="position:absolute;left:897px;top:523px;width:185px;height:18px;background:#eeeef2"></div><div style="position:absolute;left:1083px;top:523px;width:179px;height:18px;background:#f6f6f6"></div><div class="t" style="left:900.5px;top:524px;;letter-spacing:-0.062px">Caption</div><div class="t" style="left:1086.5px;top:524px;;letter-spacing:-0.109px">Ticket №</div><div style="position:absolute;left:1245px;top:523px;width:17px;height:18px;border:1px solid #cccedb;background:#f6f6f6"></div><div style="position:absolute;left:1248px;top:535px;width:2px;height:2px;background:#000;box-shadow:4px 0 #000,8px 0 #000"></div><div style="position:absolute;left:897px;top:542px;width:185px;height:18px;background:#f6f6f6"></div><div style="position:absolute;left:1083px;top:542px;width:179px;height:18px;background:#f6f6f6"></div><div class="t" style="left:900.5px;top:543px;;letter-spacing:-0.190px">Visible</div><div class="t" style="left:1086.5px;top:543px;;letter-spacing:-0.812px">1-Yes</div><div style="position:absolute;left:897px;top:561px;width:185px;height:18px;background:#f6f6f6"></div><div style="position:absolute;left:1083px;top:561px;width:179px;height:18px;background:#f6f6f6"></div><div class="t" style="left:900.5px;top:562px;;letter-spacing:-0.467px">Back Style</div><div class="t" style="left:1086.5px;top:562px;;letter-spacing:-0.245px">0-Transparent</div><div style="position:absolute;left:897px;top:580px;width:185px;height:18px;background:#f6f6f6"></div><div style="position:absolute;left:1083px;top:580px;width:179px;height:18px;background:#f6f6f6"></div><div class="t" style="left:900.5px;top:581px;;letter-spacing:-0.243px">Back Color</div><div style="position:absolute;left:1085px;top:582px;width:19px;height:14px;border:1px solid #000;background:#fff"></div><div class="t" style="left:1111.5px;top:581px;;letter-spacing:-0.913px">16777215</div><div style="position:absolute;left:897px;top:599px;width:185px;height:18px;background:#f6f6f6"></div><div style="position:absolute;left:1083px;top:599px;width:179px;height:18px;background:#f6f6f6"></div><div class="t" style="left:900.5px;top:600px;;letter-spacing:-0.281px">Special Effect</div><div class="t" style="left:1086.5px;top:600px;;letter-spacing:-0.188px">0-Flat</div><div style="position:absolute;left:897px;top:618px;width:185px;height:18px;background:#f6f6f6"></div><div style="position:absolute;left:1083px;top:618px;width:179px;height:18px;background:#f6f6f6"></div><div class="t" style="left:900.5px;top:619px;;letter-spacing:-0.243px">Fore Color</div><div style="position:absolute;left:1085px;top:620px;width:19px;height:14px;background:#000"></div><div class="t" style="left:1111.5px;top:619px;">0</div><div style="position:absolute;left:897px;top:637px;width:185px;height:18px;background:#f6f6f6"></div><div style="position:absolute;left:1083px;top:637px;width:179px;height:18px;background:#f6f6f6"></div><div class="t" style="left:900.5px;top:638px;;letter-spacing:-0.069px">Text Align</div><div class="t" style="left:1086.5px;top:638px;;letter-spacing:-0.037px">0-Left</div><div style="position:absolute;left:885px;top:661px;width:9px;height:9px;border:1px solid #1e1e1e"></div><div style="position:absolute;left:887px;top:665px;width:5px;height:1px;background:#1e1e1e"></div><div class="t" style="left:900.5px;top:657px;font-weight:bold;letter-spacing:-0.299px">Position &amp; Size</div><div style="position:absolute;left:897px;top:675px;width:185px;height:18px;background:#f6f6f6"></div><div style="position:absolute;left:1083px;top:675px;width:179px;height:18px;background:#f6f6f6"></div><div class="t" style="left:900px;top:676px;">Left</div><div class="t" style="left:1086px;top:676px;">0.1cm (100)</div></div></div>
<div style="position:absolute;left:1263px;top:466px;width:16px;height:215px;background:#f0f0f0"></div>
<div style="position:absolute;left:1264px;top:483px;width:14px;height:79px;background:#c9c9c9"></div>
<svg style="left:1266.8px;top:472.3px" width="8" height="6" viewBox="0 0 8 6" fill="none"><path d="M0.8 5.4L4 1.8L7.2 5.4" stroke="#505050" stroke-width="2.1"/></svg>
<svg style="left:1266.8px;top:669px" width="8" height="6" viewBox="0 0 8 6" fill="none"><path d="M0.8 0.6L4 4.2L7.2 0.6" stroke="#505050" stroke-width="2.1"/></svg>
<div style="position:absolute;left:883px;top:684px;width:397px;height:58px;background:#f5f5f5"></div>
<div class="t" style="left:888px;top:687px;font-weight:bold;letter-spacing:-0.445px">Caption</div>
<div class="t" style="left:13px;top:719px;;letter-spacing:-0.422px">Record:</div>
<div class="sep" style="left:65px;top:716px;height:23px"></div>
<svg style="left:74px;top:718px" width="18" height="17" viewBox="0 0 18 17"><rect x="0" y="0.8" width="4.4" height="15.6" fill="#8c8c8c"/><path d="M16 0.8V16.4L4.6 8.6Z" fill="#8c8c8c"/></svg>
<svg style="left:102px;top:718px" width="12" height="17" viewBox="0 0 12 17"><path d="M11 0.8V16.4L0.6 8.6Z" fill="#8c8c8c"/></svg>
<div style="position:absolute;left:123px;top:718px;width:46px;height:18px;border:1px solid #5e5e5e;border-top-color:#bdbdbd;background:#e6e6e6"></div>
<div class="t" style="left:158.5px;top:718px;color:#857a85">1</div>
<svg style="left:179px;top:718px" width="12" height="17" viewBox="0 0 12 17"><path d="M0 0.8V16.4L10.2 8.6Z" fill="#8c8c8c"/></svg>
<svg style="left:202px;top:718px" width="18" height="17" viewBox="0 0 18 17"><path d="M0 0.8V16.4L11 8.6Z" fill="#8c8c8c"/><rect x="11.2" y="0.8" width="4.5" height="15.6" fill="#8c8c8c"/></svg>
<div class="t" style="left:311px;top:719px;color:#a0a0a0">of&nbsp; 1</div>
<div style="position:absolute;left:423px;top:715px;width:223px;height:24px;border:1px solid #cccedb;background:#f5f5f5"></div>
<div style="position:absolute;left:652px;top:715px;width:224px;height:24px;border:1px solid #cccedb;background:#f5f5f5"></div>
<div class="sep" style="left:649px;top:714px;height:25px"></div>
<svg style="left:512px;top:719px" width="17" height="14" viewBox="0 0 17 14" fill="none"><path d="M0.8 8L5 12.6L16 0.8" stroke="#b0b0b0" stroke-width="1.5"/></svg>
<div class="t" style="left:534.5px;top:719px;color:#6d6d6d;letter-spacing:-1.286px">Save</div>
<svg style="left:741px;top:718px" width="18" height="18" viewBox="0 0 18 18" fill="none"><path d="M9 0.5V17.5M0.5 9H17.5" stroke="#b2b2b2" stroke-width="2"/></svg>
<div class="t" style="left:764px;top:719px;color:#6d6d6d">Add</div>
<div style="position:absolute;left:0;top:742px;width:1281px;height:21px;background:#007acc"></div>
<div class="t" style="left:5px;top:745px;color:#fff;letter-spacing:-0.213px">Show objects pane</div>
<div class="t" style="left:1104.5px;top:745px;color:#fff;letter-spacing:-0.668px">5.4.8.24</div>
<svg style="left:1268px;top:751px" width="11" height="11" viewBox="0 0 11 11" fill="#5aa9dc"><rect x="8" y="0" width="2" height="2"/><rect x="4" y="4" width="2" height="2"/><rect x="8" y="4" width="2" height="2"/><rect x="0" y="8" width="2" height="2"/><rect x="4" y="8" width="2" height="2"/><rect x="8" y="8" width="2" height="2"/></svg>
</body></html>
